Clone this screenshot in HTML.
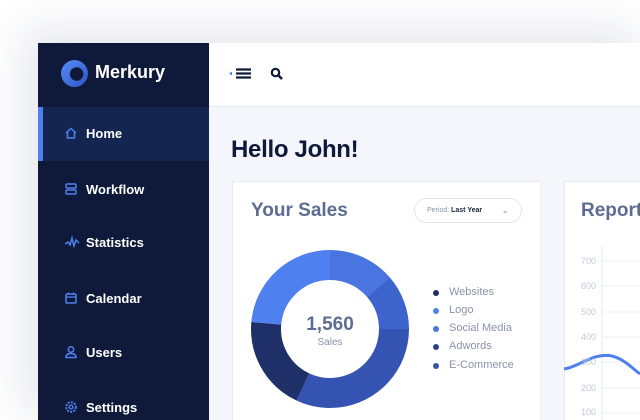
<!DOCTYPE html>
<html><head><meta charset="utf-8"><style>
*{margin:0;padding:0;box-sizing:border-box}
html,body{width:640px;height:420px;overflow:hidden}
body{background:#fff;font-family:"Liberation Sans",sans-serif;position:relative}
.panel{position:absolute;left:38px;top:43px;width:602px;height:377px;background:#f4f6fb;box-shadow:-10px -10px 40px 6px rgba(30,40,80,0.10)}
.side{position:absolute;left:38px;top:43px;width:171px;height:377px;background:#0f1a3a}
.logo{position:absolute;left:61px;top:60px;width:27px;height:27px;border-radius:50%;background:radial-gradient(circle at 58% 52%,#0f1a3a 0 6.5px,transparent 7px),linear-gradient(135deg,#5a8cf5,#2c56c4)}
.brand{position:absolute;left:95px;top:62px;color:#fff;font-size:18px;font-weight:bold}
.active{position:absolute;left:38px;top:107px;width:171px;height:54px;background:#14254f}
.bar{position:absolute;left:38px;top:107px;width:5px;height:54px;background:#4f80f0}
.item{position:absolute;left:86px;color:#fff;font-size:13px;font-weight:bold}
.ic{position:absolute;left:64px}
.header{position:absolute;left:209px;top:43px;width:431px;height:64px;background:#fff;border-bottom:1px solid #e6e9f0}
.hello{position:absolute;left:231px;top:136px;font-size:24px;color:#0f1a3a;font-weight:bold;letter-spacing:-0.3px}
.card{position:absolute;top:181px;height:239px;background:#fff;border:1px solid #e8ebf2;border-bottom:none}
.ct{position:absolute;top:200px;font-size:19px;font-weight:bold;color:#5d6d92}
.pill{position:absolute;left:414px;top:198px;width:108px;height:25px;border:1px solid #e3e6ee;border-radius:13px;font-size:7px;color:#8a93ab;padding:8px 0 0 12px}
.pill b{color:#1a2340}
.lg{position:absolute;left:449px;font-size:11px;color:#8a93ab}
.dot{position:absolute;left:433px;width:6px;height:6px;border-radius:50%}
.ax{position:absolute;left:581px;font-size:9px;color:#c3c8d6}
</style></head><body>
<div class="panel"></div>
<div class="side"></div>
<div class="logo"></div>
<div class="brand">Merkury</div>
<div class="active"></div><div class="bar"></div>
<svg class="ic" style="top:126px" width="14" height="14" viewBox="0 0 14 14"><path d="M2 7 L7 2.5 L12 7 M3.5 6 V12 H10.5 V6" fill="none" stroke="#4f80f0" stroke-width="1.5"/></svg>
<div class="item" style="top:126px">Home</div>
<svg class="ic" style="top:182px" width="14" height="14" viewBox="0 0 14 14"><rect x="2" y="2" width="10" height="4" rx="1" fill="none" stroke="#4f80f0" stroke-width="1.5"/><rect x="2" y="8" width="10" height="4" rx="1" fill="none" stroke="#4f80f0" stroke-width="1.5"/></svg>
<div class="item" style="top:182px">Workflow</div>
<svg class="ic" style="top:235px" width="16" height="14" viewBox="0 0 16 14"><path d="M1 9 L4 7 L6 10 L8 3 L10 11 L12 5 L15 8" fill="none" stroke="#4f80f0" stroke-width="1.5"/></svg>
<div class="item" style="top:235px">Statistics</div>
<svg class="ic" style="top:291px" width="14" height="14" viewBox="0 0 14 14"><rect x="2" y="3" width="10" height="9" rx="1" fill="none" stroke="#4f80f0" stroke-width="1.5"/><path d="M4.5 1.5V4M9.5 1.5V4M2 6H12" stroke="#4f80f0" stroke-width="1.3"/></svg>
<div class="item" style="top:291px">Calendar</div>
<svg class="ic" style="top:345px" width="14" height="14" viewBox="0 0 14 14"><circle cx="7" cy="4.5" r="2.7" fill="none" stroke="#4f80f0" stroke-width="1.5"/><path d="M2 12.5 C2 9 4.5 8.5 7 8.5 C9.5 8.5 12 9 12 12.5 Z" fill="none" stroke="#4f80f0" stroke-width="1.5"/></svg>
<div class="item" style="top:345px">Users</div>
<svg class="ic" style="top:400px" width="14" height="14" viewBox="0 0 14 14"><circle cx="7" cy="7" r="4.8" fill="none" stroke="#4f80f0" stroke-width="2" stroke-dasharray="2 1.2"/><circle cx="7" cy="7" r="1.8" fill="none" stroke="#4f80f0" stroke-width="1.4"/></svg>
<div class="item" style="top:400px">Settings</div>
<div class="header"></div>
<svg style="position:absolute;left:229px;top:67px" width="24" height="14" viewBox="0 0 24 14"><path d="M0 6.5 L3 4.5 V8.5Z" fill="#4f80f0"/><path d="M7 2.5H22M7 6.5H22M7 10.5H22" stroke="#0f1a3a" stroke-width="2.2"/></svg>
<svg style="position:absolute;left:270px;top:67px" width="14" height="14" viewBox="0 0 14 14"><circle cx="5.5" cy="5.5" r="3.7" fill="none" stroke="#0f1a3a" stroke-width="2.2"/><path d="M8 8 L12 12" stroke="#0f1a3a" stroke-width="2.5"/></svg>
<div class="hello">Hello John!</div>
<div class="card" style="left:232px;width:309px"></div>
<div class="card" style="left:564px;width:76px;border-right:none"></div>
<div class="ct" style="left:251px">Your Sales</div>
<div class="ct" style="left:581px">Report</div>
<div class="pill">Period: <b>Last Year</b><span style="position:absolute;right:12px;top:6px;font-size:9px;color:#8a93ab">&#8964;</span></div>
<svg style="position:absolute;left:250px;top:249px" width="160" height="160" viewBox="0 0 160 160">
<g transform="rotate(-90 80 80)" fill="none" stroke-width="30">
<circle cx="80" cy="80" r="64" stroke="#4a74e0" stroke-dasharray="54.75 402.12"/>
<circle cx="80" cy="80" r="64" stroke="#3d63cc" stroke-dasharray="45.8 402.12" stroke-dashoffset="-54.75"/>
<circle cx="80" cy="80" r="64" stroke="#3553b0" stroke-dasharray="128.5 402.12" stroke-dashoffset="-100.53"/>
<circle cx="80" cy="80" r="64" stroke="#1f2f68" stroke-dasharray="78.2 402.12" stroke-dashoffset="-229"/>
<circle cx="80" cy="80" r="64" stroke="#4f80f0" stroke-dasharray="95 402.12" stroke-dashoffset="-307.2"/>
</g>
<text x="80" y="81" text-anchor="middle" font-size="19" font-weight="bold" fill="#5d6d92" font-family="Liberation Sans">1,560</text>
<text x="80" y="96" text-anchor="middle" font-size="10" fill="#8a93ab" font-family="Liberation Sans">Sales</text>
</svg>
<div class="dot" style="top:290px;background:#1f2f68"></div><div class="lg" style="top:286px">Websites</div>
<div class="dot" style="top:308px;background:#4f80f0"></div><div class="lg" style="top:304px">Logo</div>
<div class="dot" style="top:326px;background:#4a74e0"></div><div class="lg" style="top:322px">Social Media</div>
<div class="dot" style="top:344px;background:#2c428f"></div><div class="lg" style="top:340px">Adwords</div>
<div class="dot" style="top:363px;background:#3553b0"></div><div class="lg" style="top:359px">E-Commerce</div>
<svg style="position:absolute;left:564px;top:240px" width="76" height="180" viewBox="0 0 76 180">
<path d="M38 6V180" stroke="#e6e9f0"/>
<g stroke="#eef0f5"><path d="M38 21H76M38 46H76M38 72H76M38 97H76M38 122H76M38 148H76M38 173H76"/></g>
<path d="M0 129 C15 127 30 112 48 116 C60 119 68 128 76 134" fill="none" stroke="#4f80f0" stroke-width="3"/>
</svg>
<div class="ax" style="top:256px">700</div><div class="ax" style="top:281px">600</div><div class="ax" style="top:307px">500</div><div class="ax" style="top:332px">400</div><div class="ax" style="top:357px">300</div><div class="ax" style="top:383px">200</div><div class="ax" style="top:407px">100</div>
</body></html>
